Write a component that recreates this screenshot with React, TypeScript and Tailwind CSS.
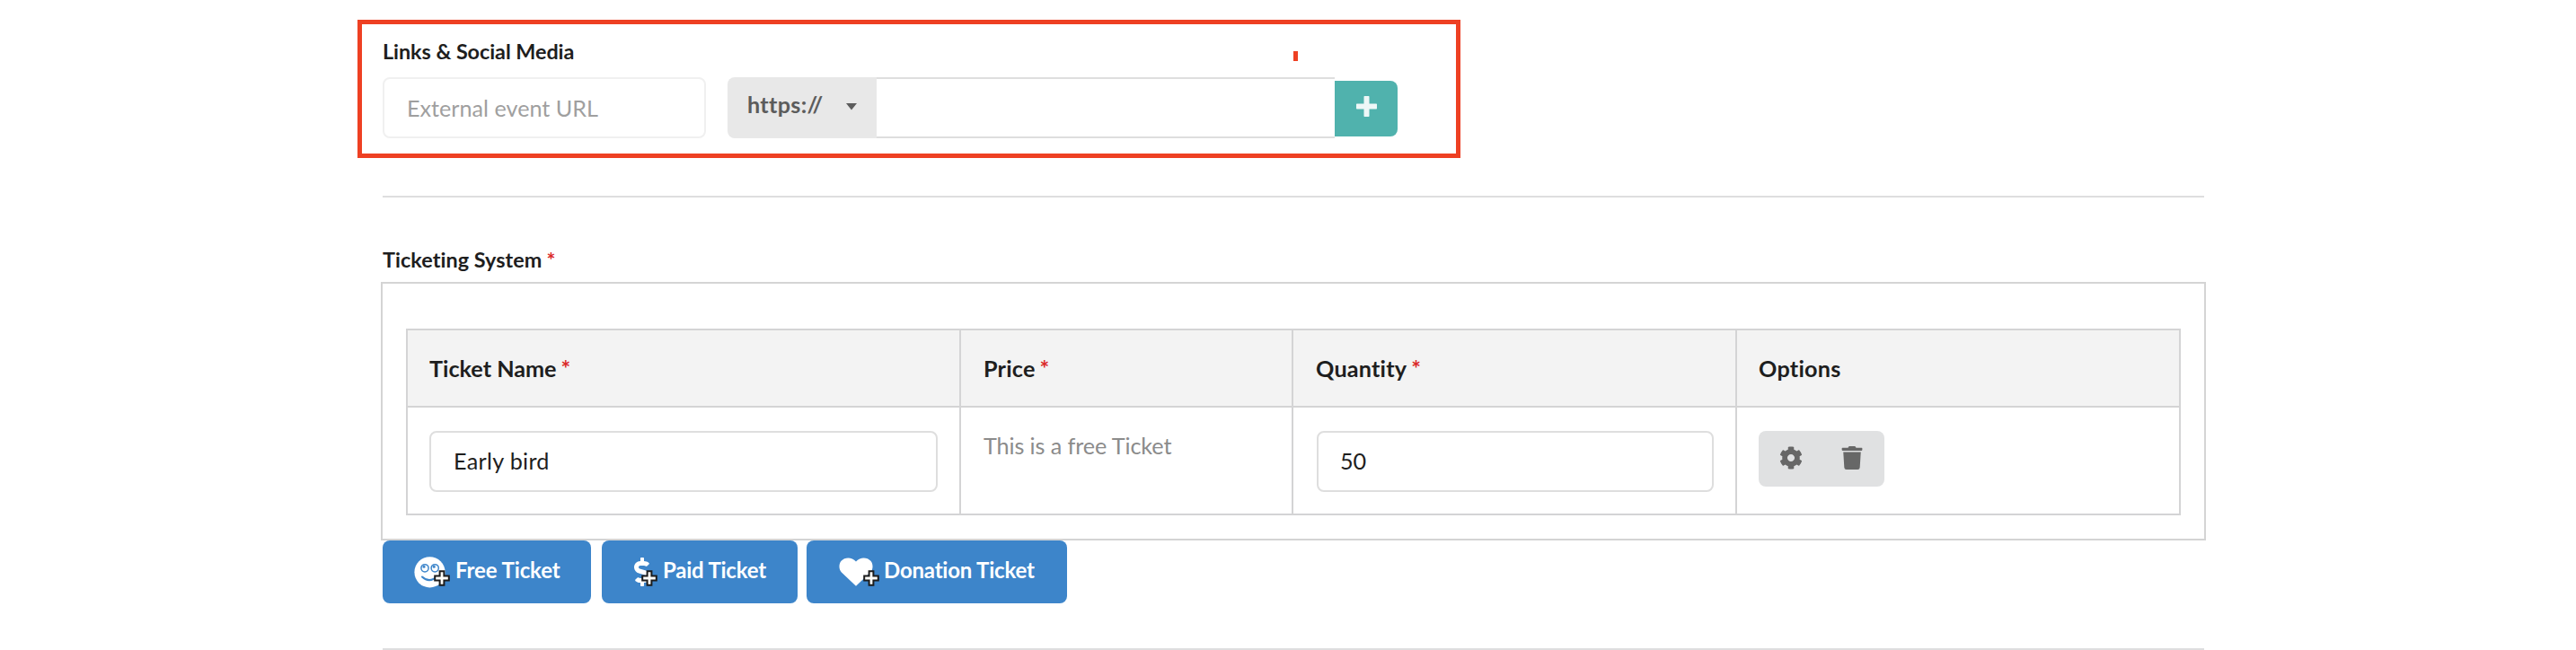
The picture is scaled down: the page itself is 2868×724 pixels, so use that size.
import type { ReactNode } from "react";
import { FaCog, FaDollarSign, FaTrash } from "react-icons/fa";

const Required = () => <span className="ml-[5px] text-[#db2828]">*</span>;

function CursorPlus() {
  return (
    <svg className="absolute top-[33px] right-0 size-[18px]" viewBox="0 0 18 18">
      <path
        d="M6.6 1.2h4.8v5.4h5.4v4.8h-5.4v5.4H6.6v-5.4H1.2V6.6h5.4z"
        fill="#fffffa"
        stroke="#1c1c1c"
        strokeWidth="2"
      />
    </svg>
  );
}

function Smiley() {
  return (
    <svg className="size-[35px]" viewBox="0 0 35 35" fill="none">
      <circle cx="17.5" cy="17.3" r="17.1" fill="#fff" />
      <g stroke="#3d85ca" strokeWidth="1.5" strokeLinecap="round">
        <circle cx="12" cy="12.8" r="4.1" />
        <circle cx="23.2" cy="12.8" r="4.1" />
        <path d="M9 22.500Q17 30 26 22" strokeWidth="2" />
      </g>
      <circle cx="11" cy="11.200" r="1.5" fill="#3d85ca" />
      <circle cx="22.200" cy="11.200" r="1.5" fill="#3d85ca" />
    </svg>
  );
}

function Heart() {
  return (
    <svg className="h-[32px] w-[38px]" viewBox="0 0 38 32">
      <path
        d="M19 31.8 2.9 16.6C-.4 13.2-.2 7 2.6 3.8 6.6-.8 14.4-.9 19 4.4 23.6-.9 31.4-.8 35.4 3.8c2.8 3.2 3 9.4-.3 12.8z"
        fill="#fff"
      />
    </svg>
  );
}

type TicketButtonProps = {
  icon: ReactNode;
  className: string;
  iconClass: string;
  children: ReactNode;
};

function TicketButton({ icon, className, iconClass, children }: TicketButtonProps) {
  return (
    <button className={`flex h-[70px] items-center rounded-[8px] bg-[#3d85ca] text-[24px] font-bold text-white ${className}`}>
      <span className={`relative flex h-[70px] shrink-0 items-center ${iconClass}`}>
        {icon}
        <CursorPlus />
      </span>
      <span className="mb-[4px] whitespace-nowrap">{children}</span>
    </button>
  );
}

const head = "flex items-center border-b-2 border-[#d4d4d5] bg-[#f3f3f3] font-bold";

export default function App() {
  return (
    <main
      className="h-[724px] w-[2868px] overflow-hidden bg-white text-[25.2px] leading-[36px] text-[#1e1e1e] [font-variant-ligatures:none]"
      style={{ fontFamily: "Lato, 'Liberation Sans', sans-serif" }}
    >
      <section className="relative ml-[398px] h-[176px] w-[1228px] pt-[22px]">
        <div className="h-[154px] border-[5px] border-[#ee4023] pl-[23px]">
          <h2 className="pt-[12px] text-[23.4px] font-bold tracking-[-0.06px]">Links &amp; Social Media</h2>
          <div className="mt-[11px] flex">
            <div className="flex h-[68px] w-[360px] items-center rounded-[8px] border-2 border-[#f0f0f0] pl-[25px] text-[#9f9f9f]">
              External event URL
            </div>
            <div className="ml-[24px] flex h-[68px] w-[166px] rounded-l-[8px] bg-[#e8e8e8] pt-[12px] pl-[22px] font-bold tracking-[0.3px] text-[#5c5c5c]">
              https://
              <svg className="mt-[17px] mr-[22px] ml-auto h-[8px] w-[12px]" viewBox="0 0 12 8">
                <path d="M0 0h12L6 7.5z" fill="#5c5c5c" />
              </svg>
            </div>
            <div className="h-[68px] w-[510px] border-y-2 border-[#dedede]" />
            <button className="mt-[4px] flex h-[62px] w-[70px] justify-center rounded-r-[8px] bg-[#50b2ad] pt-[17px]">
              <svg className="size-[23px]" viewBox="0 0 23 23">
                <path
                  d="M9.2 0h4.6q.7 0 .7.7v7.8h7.8q.7 0 .7.7v4.6q0 .7-.7.7h-7.8v7.8q0 .7-.7.7H9.2q-.7 0-.7-.7v-7.8H.7q-.7 0-.7-.7V9.2q0-.7.7-.7h7.8V.7q0-.7.7-.7z"
                  fill="#eef7f7"
                />
              </svg>
            </button>
          </div>
        </div>
        <span className="absolute top-[57px] left-[1042px] h-[11px] w-[5px] bg-[#ee4023]" />
      </section>

      <hr className="mt-[42px] ml-[426px] h-[2px] w-[2028px] border-0 bg-[#dededf]" />

      <section className="mt-[51px] ml-[424px] w-[2032px]">
        <h2 className="ml-[2px] h-[43px] text-[23.4px] font-bold tracking-[0.05px]">
          Ticketing System<Required />
        </h2>
        <div className="h-[288px] border-2 border-[#d4d4d4] pt-[50px] pl-[26px]">
          <div className="grid h-[208px] w-[1976px] grid-cols-[616px_370px_494px_492px] grid-rows-[86px_118px] border-2 border-[#d4d4d5]">
            <div className={`${head} border-r-2 pl-[24px]`}>
              Ticket Name<Required />
            </div>
            <div className={`${head} border-r-2 pl-[25px] tracking-[0.2px]`}>
              Price<Required />
            </div>
            <div className={`${head} border-r-2 pl-[25px] tracking-[0.2px]`}>
              Quantity<Required />
            </div>
            <div className={`${head} pl-[24px] tracking-[0.25px]`}>Options</div>
            <div className="border-r-2 border-[#d4d4d5] pt-[26px] pl-[24px]">
              <div className="flex h-[68px] w-[566px] items-center rounded-[8px] border-2 border-[#dedede] pb-[2px] pl-[25px] tracking-[0.3px]">
                Early bird
              </div>
            </div>
            <div className="border-r-2 border-[#d4d4d5] pt-[24px] pl-[25px] tracking-[-0.1px] text-[#8b8b8b]">
              This is a free Ticket
            </div>
            <div className="border-r-2 border-[#d4d4d5] pt-[26px] pl-[26px]">
              <div className="flex h-[68px] w-[442px] items-center rounded-[8px] border-2 border-[#dedede] pb-[2px] pl-[24px]">
                50
              </div>
            </div>
            <div className="pt-[26px] pl-[24px]">
              <div className="flex h-[62px] w-[140px] rounded-[8px] bg-[#e0e1e2] pt-[17px] pl-[23px] text-[#676767]">
                <FaCog className="size-[26px]" />
                <FaTrash className="ml-[42px] size-[26px]" />
              </div>
            </div>
          </div>
        </div>
        <div className="ml-[2px] flex">
          <TicketButton className="w-[232px] pl-[35px] tracking-[-0.1px]" iconClass="mr-[6px] w-[40px]" icon={<Smiley />}>
            Free Ticket
          </TicketButton>
          <TicketButton
            className="ml-[12px] w-[218px] pl-[36px] tracking-[-0.22px]"
            iconClass="mr-[6px] w-[26px]"
            icon={<FaDollarSign className="h-[36px] w-[18px]" />}
          >
            Paid Ticket
          </TicketButton>
          <TicketButton className="ml-[10px] w-[290px] pl-[36px] tracking-[-0.2px]" iconClass="mr-[5px] w-[45px]" icon={<Heart />}>
            Donation Ticket
          </TicketButton>
        </div>
      </section>

      <hr className="mt-[50px] ml-[426px] h-[2px] w-[2028px] border-0 bg-[#dededf]" />
    </main>
  );
}
